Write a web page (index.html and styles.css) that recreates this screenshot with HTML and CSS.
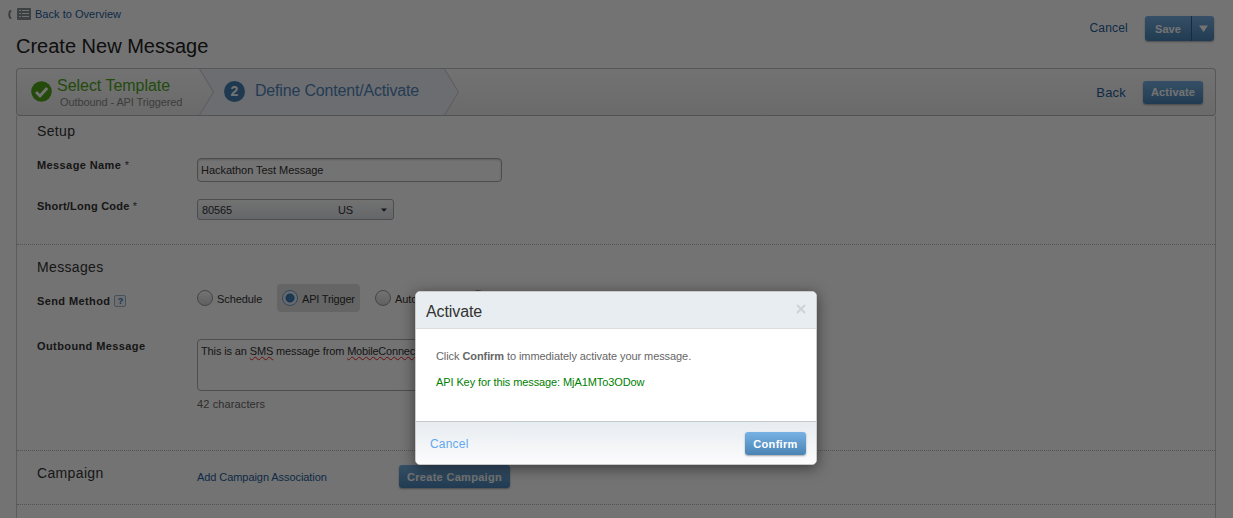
FILE: index.html
```html
<!DOCTYPE html>
<html lang="en">
<head>
<meta charset="utf-8">
<title>Create New Message</title>
<link rel="stylesheet" href="styles.css">
</head>
<body>
<div class="page">
  <header class="header">
    <div>
      <a class="back-link">
        <svg class="chevron" width="5" height="9" viewBox="0 0 5 9"><path d="M4 .3C1.600 2.500 1.600 6.500 4 8.700" fill="none" stroke="#888" stroke-width="2"/></svg>
        <svg width="14" height="12" viewBox="0 0 14 12"><rect width="14" height="12" rx="1" fill="#8b9097"/><path d="M2 2.500h2M5 2.500h7M2 5.500h2M5 5.500h7M2 8.500h2M5 8.500h7" stroke="#f4f5f6" stroke-width="1"/></svg>
        <span>Back to Overview</span>
      </a>
      <h1 class="title">Create New Message</h1>
    </div>
    <div class="header-actions">
      <a class="cancel">Cancel</a>
      <div class="split">
        <button class="btn save">Save</button>
        <button class="btn caret"><svg width="9" height="7" viewBox="0 0 9 7"><path d="M0 .5h9L4.500 7z" fill="#fff"/></svg></button>
      </div>
    </div>
  </header>

  <nav class="wizard">
    <svg class="wizard-shape" width="444" height="46" viewBox="0 0 444 46">
      <path d="M182.500 0h245l14 23-14 23h-245l14-23z" fill="#eef2fb"/>
      <path d="M182.500 0l14 23-14 23M427.500 0l14 23-14 23" fill="none" stroke="#c8c8c8"/>
    </svg>
    <div class="step step-done">
      <svg width="21" height="22" viewBox="0 0 21 22"><circle cx="10.500" cy="10.500" r="10.300" fill="#50a51c"/><path d="M5 11l4 4 7.200-8" fill="none" stroke="#fff" stroke-width="2.800"/></svg>
      <div class="step-text">
        <div class="step-title">Select Template</div>
        <div class="step-sub">Outbound - API Triggered</div>
      </div>
    </div>
    <div class="step step-current">
      <span class="step-number">2</span>
      <div class="step-title">Define Content/Activate</div>
    </div>
    <div class="wizard-actions">
      <a class="back">Back</a>
      <button class="btn activate">Activate</button>
    </div>
  </nav>

  <main class="panel">
    <section class="section setup">
      <h2>Setup</h2>
      <div class="row name-row">
        <label>Message Name <i>*</i></label>
        <input class="input" value="Hackathon Test Message" spellcheck="false">
      </div>
      <div class="row code-row">
        <label class="code-label">Short/Long Code <i>*</i></label>
        <div class="select"><span class="code">80565</span><span class="country">US</span><svg width="6" height="4" viewBox="0 0 6 4"><path d="M0 .5h6L3 3.800z" fill="#333"/></svg></div>
      </div>
    </section>

    <section class="section messages">
      <h2>Messages</h2>
      <div class="row method-row">
        <label>Send Method <span class="help">?</span></label>
        <div class="radios">
          <span class="radio"><span class="dot"></span><span class="opt">Schedule</span></span>
          <span class="radio selected"><span class="dot on"></span><span class="opt api">API Trigger</span></span>
          <span class="radio"><span class="dot"></span><span class="opt auto">Auto</span></span>
          <span class="radio"><span class="dot"></span></span>
        </div>
      </div>
      <div class="row outbound-row">
        <label>Outbound Message</label>
        <div>
          <div class="textarea">This is an <u>SMS</u> message from <u class="product">MobileConnect</u></div>
          <div class="count">42 characters</div>
        </div>
      </div>
    </section>

    <section class="section campaign">
      <h2>Campaign</h2>
      <a class="associate">Add Campaign Association</a>
      <button class="btn create">Create Campaign</button>
    </section>
  </main>
</div>

<div class="overlay">
  <div class="modal">
    <div class="modal-head">
      <h3>Activate</h3>
      <svg width="10" height="10" viewBox="0 0 10 10"><path d="M1 1l8 8M9 1L1 9" stroke="#cfd3d5" stroke-width="2"/></svg>
    </div>
    <div class="modal-body">
      <p class="prompt">Click <b>Confirm</b> to immediately activate your message.</p>
      <p class="key">API Key for this message: <span>MjA1MTo3ODow</span></p>
    </div>
    <div class="modal-foot">
      <a class="modal-cancel">Cancel</a>
      <button class="btn confirm">Confirm</button>
    </div>
  </div>
</div>
</body>
</html>
```
FILE: styles.css
```css
* { box-sizing: border-box; }
body {
  margin: 0;
  height: 518px;
  overflow: hidden;
  position: relative;
  background: #fff;
  color: #333;
  font: 11px/14px "Liberation Sans", Arial, sans-serif;
}
h1, h2, h3, p { margin: 0; font-weight: normal; }
svg { display: block; flex: none; }
a { color: #24609c; white-space: nowrap; }

.page { height: 518px; padding: 0 17px 0 16px; overflow: hidden; }
.header { height: 68px; display: flex; justify-content: space-between; }
.back-link { display: flex; align-items: center; gap: 4px; height: 14px; margin: 7px 0 0 -9px; }
.back-link span { letter-spacing: .03px; }
.chevron { margin-right: 1px; }
.title { margin-top: 13px; font-size: 20px; line-height: 24px; color: #222; letter-spacing: 0; }
.header-actions { display: flex; align-items: flex-start; padding: 16px 2px 0 0; }
.cancel { font-size: 12px; line-height: 24px; letter-spacing: .2px; margin-right: 17px; }
.split { display: flex; }

.btn {
  border: 0;
  border-radius: 3px;
  padding: 0;
  height: 23px;
  color: #fff;
  font: bold 11px/22px "Liberation Sans", Arial, sans-serif;
  letter-spacing: .3px;
  white-space: nowrap;
  background: linear-gradient(#78b1e3, #4a84b5);
  box-shadow: 0 1px 2px rgba(0, 0, 0, .35);
}
.save { width: 47px; height: 25px; border-radius: 3px 0 0 3px; border-right: 1px solid #3a6c96; letter-spacing: .1px; }
.caret { width: 22px; height: 25px; border-radius: 0 3px 3px 0; display: flex; justify-content: center; align-items: center; }
.activate { letter-spacing: .15px; }

.wizard {
  position: relative;
  height: 48px;
  display: flex;
  border: 1px solid #c2c2c2;
  border-bottom-color: #b5b5b5;
  border-radius: 4px;
  background: linear-gradient(#fdfdfd, #ececec);
}
.wizard-shape { position: absolute; left: 0; top: 0; }
.step { position: relative; display: flex; }
.step-done { width: 194px; padding: 12px 0 0 14px; gap: 5px; }
.step-text { margin-top: -4px; }
.step-title { font-size: 16px; line-height: 18px; color: #50a51c; letter-spacing: -.03px; white-space: nowrap; }
.step-sub { margin: 1px 0 0 3px; line-height: 13px; color: #888; letter-spacing: -.1px; white-space: nowrap; }
.step-current { padding: 12px 0 0 13px; gap: 10px; }
.step-current .step-title { margin-top: 1px; color: #5186b8; letter-spacing: -.18px; }
.step-number {
  width: 21px;
  height: 21px;
  border-radius: 50%;
  background: #457fb1;
  color: #fff;
  font: bold 14px/21px "Liberation Sans", Arial, sans-serif;
  text-align: center;
}
.wizard-actions { position: relative; margin-left: auto; display: flex; align-items: center; padding-right: 12px; }
.back { margin: 2px 17px 0 0; font-size: 13px; letter-spacing: .2px; }
.activate { width: 60px; }

.panel { height: 402px; border: solid #ccc; border-width: 0 1px; }
.section { padding-left: 20px; border-bottom: 1px dotted #b8b8b8; }
.section h2 { font-size: 14px; line-height: 18px; letter-spacing: .35px; }
.row { display: grid; grid-template-columns: 160px auto; justify-content: start; align-items: start; }
label { font-weight: bold; letter-spacing: .4px; white-space: nowrap; }
label i { font-weight: normal; font-style: normal; color: #444; }
.code-label { letter-spacing: .22px; }
.setup { height: 129px; padding-top: 6px; }
.name-row { margin-top: 18px; }
.input {
  width: 305px;
  height: 24px;
  padding: 0 3px;
  border: 1px solid #aaa;
  border-radius: 4px;
  color: #333;
  font: 11px "Liberation Sans", Arial, sans-serif;
  letter-spacing: -.04px;
  box-shadow: inset 0 1px 2px rgba(0, 0, 0, .2);
}
.code-row { margin-top: 17px; }
.select {
  width: 197px;
  height: 21px;
  display: flex;
  align-items: center;
  padding: 1px 6px 0 4px;
  border: 1px solid #aaa;
  border-radius: 3px;
  background: linear-gradient(#fdfdfd, #dfe3e9);
}
.code { width: 136px; letter-spacing: -.1px; }
.country { width: 43px; letter-spacing: -.3px; }

.messages { height: 206px; padding-top: 13px; }
.method-row { margin-top: 8px; }
.method-row label { display: flex; align-items: center; gap: 4px; padding-top: 10px; }
.help {
  width: 12px;
  height: 12px;
  border: 1px solid #9db3c6;
  border-radius: 2px;
  color: #2f77b2;
  font: bold 9px/10px "Liberation Sans", Arial, sans-serif;
  letter-spacing: 0;
  text-align: center;
  background: #f1f6fa;
}
.radios { display: flex; }
.radio { display: flex; height: 28px; padding-top: 6px; gap: 4px; }
.radio:first-child { width: 80px; }
.radio:nth-child(3) { width: 110px; padding-left: 15px; }
.radio.selected { width: 83px; padding-left: 5px; border-radius: 4px; background: #dfdfdf; }
.dot { width: 16px; height: 16px; flex: none; border: 1px solid #999; border-radius: 50%; background: linear-gradient(#fff, #d5d5d5); }
.dot.on { border-color: #6e9cc4; background: radial-gradient(circle, #3e82bb 0 3px, #3774aa 4px, #e4eef7 5px); }
.opt { margin-top: 2px; letter-spacing: -.08px; white-space: nowrap; }
.opt.api { letter-spacing: -.2px; }
.outbound-row { margin-top: 27px; }
.textarea {
  width: 305px;
  height: 52px;
  padding: 4px 3px;
  border: 1px solid #aaa;
  border-radius: 4px;
  letter-spacing: -.13px;
  white-space: nowrap;
}
.textarea u { text-decoration: underline wavy #e22 1px; text-decoration-skip-ink: none; text-underline-offset: 1px; }
.product { letter-spacing: -.2px; }
.count { margin-top: 6px; color: #666; letter-spacing: .12px; }
.campaign { height: 54px; display: grid; grid-template-columns: 160px 202px 111px; align-items: start; padding-top: 13px; }
.associate { padding-top: 6px; letter-spacing: -.07px; }
.create { margin-top: 1px; }

.overlay { position: absolute; inset: 0; padding: 291px 0 0 415px; background: rgba(0, 0, 0, .55); }
.modal {
  width: 402px;
  height: 174px;
  display: flex;
  flex-direction: column;
  border: 1px solid #c9c9c9;
  border-radius: 5px;
  background: #fff;
  overflow: hidden;
  box-shadow: 0 3px 14px rgba(0, 0, 0, .5);
}
.modal-head { height: 37px; display: flex; justify-content: space-between; padding: 12px 10px 0; background: #e7edf0; border-bottom: 1px solid #ddd; }
.modal-head h3 { font-size: 16px; line-height: 16px; letter-spacing: -.1px; }
.modal-body { height: 92px; padding: 20px; color: #666; white-space: nowrap; }
.prompt { letter-spacing: -.08px; }
.key { margin-top: 12px; color: #008000; letter-spacing: -.1px; }
.modal-foot { height: 43px; display: flex; justify-content: space-between; padding: 11px 10px 0 14px; border-top: 1px solid #c4c8ca; background: linear-gradient(#e7ecf0, #fcfcfd); }
.modal-cancel { font-size: 12px; line-height: 22px; color: #62a8ee; letter-spacing: .2px; }
.confirm { width: 61px; margin-top: -1px; }
```
